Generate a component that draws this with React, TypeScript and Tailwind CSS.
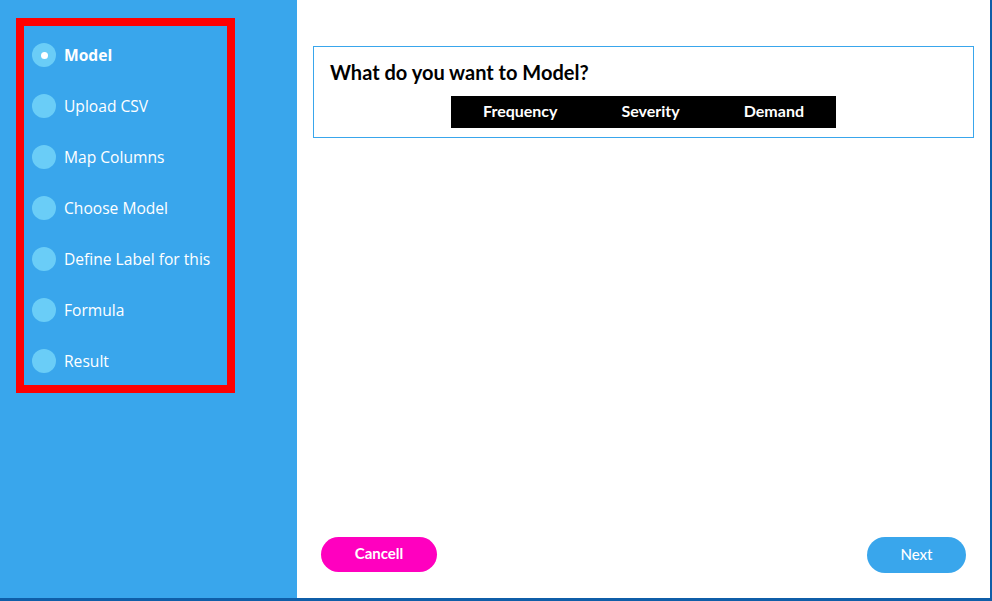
const steps = [
  "Model",
  "Upload CSV",
  "Map Columns",
  "Choose Model",
  "Define Label for this",
  "Formula",
  "Result",
];

const options = ["Frequency", "Severity", "Demand"];

export default function App() {
  const active = 0;

  return (
    <div className="flex h-[601px] w-full border-r-2 border-b-[3px] border-[#0f5ea8] bg-white">
      {/* sidebar */}
      <aside className="w-[297px] shrink-0 bg-[#39a6ec] pt-[18px] pl-4">
        <div className="w-[219px] border-8 border-[#ff0000] pt-[17px] pb-3 pl-2">
          <ul className="flex flex-col gap-[27px]">
            {steps.map((step, i) => (
              <li key={step} className="flex h-6 items-center gap-2">
                <span className="flex h-6 w-6 items-center justify-center rounded-full bg-[#6acdf7]">
                  {i === active && (
                    <span className="h-[7px] w-[7px] rounded-full bg-white" />
                  )}
                </span>
                <span
                  className={
                    "text-[15.6px] leading-6 text-white font-['Open_Sans',sans-serif] " +
                    (i === active ? "font-bold" : "font-normal")
                  }
                >
                  {step}
                </span>
              </li>
            ))}
          </ul>
        </div>
      </aside>

      {/* main */}
      <main className="flex flex-1 flex-col px-4 pt-[46px] font-['Lato',sans-serif]">
        <div className="border border-[#39a6ec] px-4 pt-[13px] pb-[9px]">
          <h2 className="text-[20px] leading-6 font-bold text-black">
            What do you want to Model?
          </h2>
          <div className="mx-auto mt-3 flex h-8 w-fit items-center bg-black">
            {options.map((opt) => (
              <button
                key={opt}
                className="px-8 pb-[2px] text-[16px] font-bold text-white"
              >
                {opt}
              </button>
            ))}
          </div>
        </div>

        <div className="flex-1" />

        <div className="flex items-start justify-between px-2 pb-[25px]">
          <button className="h-[35px] w-[116px] rounded-full bg-[#ff00bf] pb-[2px] text-[15px] font-bold text-white">
            Cancell
          </button>
          <button className="h-9 w-[99px] rounded-full bg-[#39a6ec] pb-[2px] text-[15px] font-medium text-white">
            Next
          </button>
        </div>
      </main>
    </div>
  );
}
